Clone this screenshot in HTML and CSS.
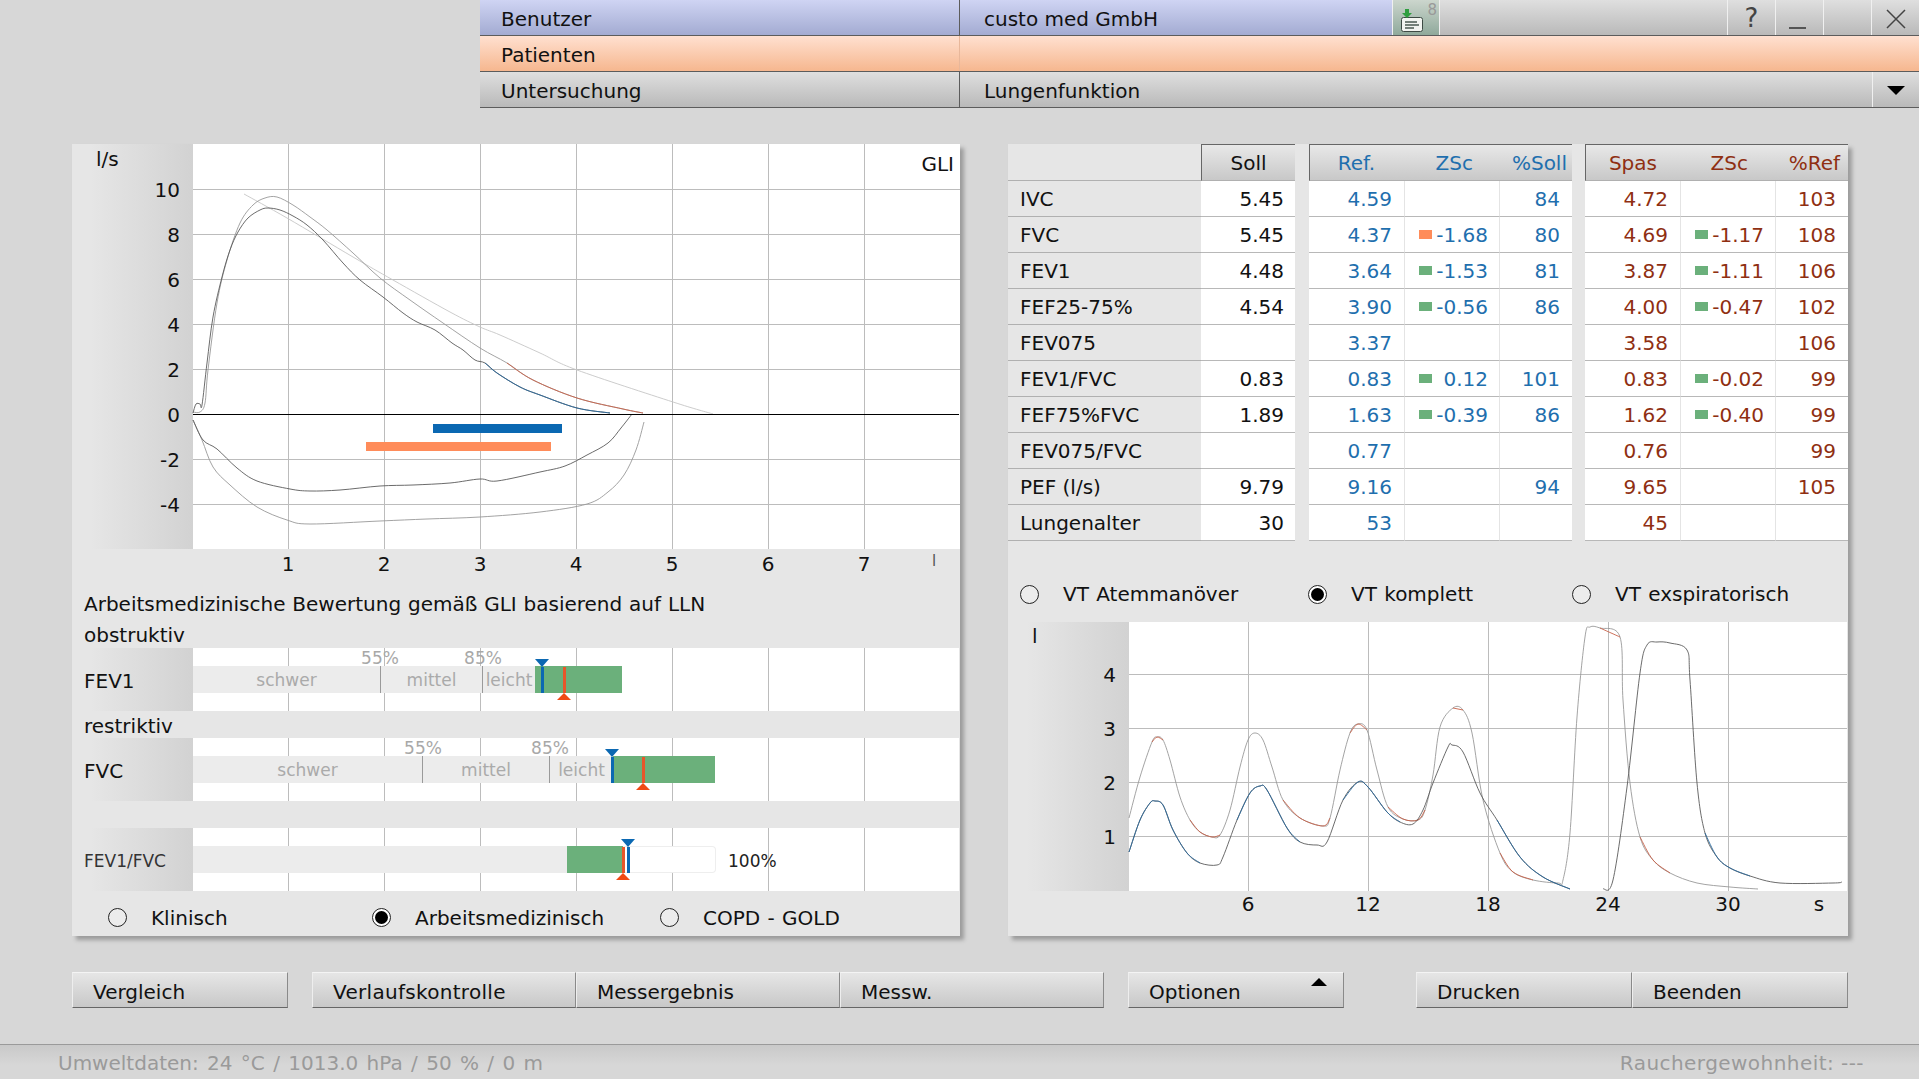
FILE: index.html
```html
<!DOCTYPE html>
<html lang="de">
<head>
    <meta charset="UTF-8">
    <title>Lungenfunktion</title>
    <link rel="stylesheet" href="styles.css">
</head>
<body>
    <header class="topbar">
        <div class="bar-row row-user">
            <div class="bar-label">Benutzer</div>
            <div class="bar-value">custo med GmbH</div>
            <div class="bar-icon">
                <svg width="48" height="35" viewBox="0 0 48 35">
                    <rect x="8.5" y="17.5" width="21" height="14" rx="2" fill="#f2f4f0" stroke="#3d4a44"/>
                    <path d="M12 22h12M12 25h14M12 28h9" stroke="#4b5a52" stroke-width="1.4"/>
                    <path d="M12 9h4v4h3l-5 5-5-5h3z" fill="#2f9e3f"/>
                </svg>
                <span class="icon-count">8</span>
            </div>
            <div class="bar-fill"></div>
            <div class="bar-btn">?</div>
            <div class="bar-btn btn-min"><span></span></div>
            <div class="bar-btn"></div>
            <div class="bar-btn">
                <svg width="22" height="22" viewBox="0 0 22 22"><path d="M2 2l18 18M20 2L2 20" stroke="#444" stroke-width="1.5"/></svg>
            </div>
        </div>
        <div class="bar-row row-patient">
            <div class="bar-label">Patienten</div>
            <div class="bar-value"></div>
        </div>
        <div class="bar-row row-exam">
            <div class="bar-label">Untersuchung</div>
            <div class="bar-value wide">Lungenfunktion</div>
            <div class="bar-btn btn-drop"><span class="arrow-down"></span></div>
        </div>
    </header>

    <main class="panels">
        <section class="panel panel-left">
            <svg class="flow-chart" width="888" height="445" viewBox="72 144 888 445">
                <defs>
                    <linearGradient id="axisFade" x1="0" x2="1" y1="0" y2="0">
                        <stop offset="0.15" stop-color="#e6e6e6"/>
                        <stop offset="1" stop-color="#d2d2d2"/>
                    </linearGradient>
                </defs>
                <rect x="72" y="144" width="121" height="405" fill="url(#axisFade)"/>
                <rect x="193" y="144" width="767" height="405" fill="#fff"/>
                <g class="grid">
                    <path d="M288 144V549M384 144V549M480 144V549M576 144V549M672 144V549M768 144V549M864 144V549"/>
                    <path d="M193 189H960M193 234H960M193 279H960M193 324H960M193 369H960M193 459H960M193 504H960"/>
                </g>
                <rect x="433" y="424" width="129" height="9" fill="#0b68b2"/>
                <rect x="366" y="442" width="185" height="9" fill="#ff8c5a"/>
                <polyline class="curve-ref" points="244,194 287,218 353,257 393,280 450,312 480,327 500,335 540,353 577,370 673,402 713,414"/>
                <polyline class="curve-light" points="193,412 200,412 205,403 208,370 217,303 227,260 240,223 253,205 265,198 277,197 293,205 310,217 327,230 353,253 380,278 410,300 443,323 480,348 507,363 533,380 577,398 623,409 643,413"/>
                <polyline class="tail-red" points="507,363 533,380 577,398 623,409 643,413"/>
                <polyline class="curve-dark" points="193,413 196,404 200,404 202,405 207,363 213,317 222,277 230,250 238,232 248,218 260,210 268,208 280,210 293,216 307,225 323,240 343,263 360,280 383,297 403,313 417,322 435,330 452,343 463,350 475,360 485,363 497,373 520,387 540,395 577,408 610,413"/>
                <polyline class="tail-blue" points="485,363 497,373 520,387 540,395 577,408 610,413"/>
                <polyline class="curve-light" points="193,420 202,440 213,467 230,485 257,507 287,520 310,524 380,521 427,519 480,517 540,512 587,504 608,492 624,475 636,450 644,422"/>
                <polyline class="curve-dark" points="193,420 203,440 217,449 237,468 257,481 290,489 310,491 340,490 380,486 413,485 450,483 480,479 497,481 540,472 565,466 587,455 608,443 621,428 632,414"/>
                <path class="zero-line" d="M193 414H959"/>
                <g class="axis-text end">
                    <text x="180" y="197">10</text>
                    <text x="180" y="242">8</text>
                    <text x="180" y="287">6</text>
                    <text x="180" y="332">4</text>
                    <text x="180" y="377">2</text>
                    <text x="180" y="422">0</text>
                    <text x="180" y="467">-2</text>
                    <text x="180" y="512">-4</text>
                    <text x="954" y="171">GLI</text>
                </g>
                <text class="axis-text" x="96" y="166">l/s</text>
                <g class="axis-text middle">
                    <text x="288" y="571">1</text>
                    <text x="384" y="571">2</text>
                    <text x="480" y="571">3</text>
                    <text x="576" y="571">4</text>
                    <text x="672" y="571">5</text>
                    <text x="768" y="571">6</text>
                    <text x="864" y="571">7</text>
                </g>
                <text class="axis-small" x="932" y="566">l</text>
            </svg>

            <div class="heading">Arbeitsmedizinische Bewertung gemäß GLI basierend auf LLN</div>
            <div class="sub-heading first">obstruktiv</div>
            <div class="grade-row">
                <div class="grade-label">FEV1</div>
                <div class="track">
                    <span class="pct" style="left:187px">55%</span>
                    <span class="pct" style="left:290px">85%</span>
                    <div class="band">
                        <div class="seg" style="width:188px">schwer</div>
                        <div class="seg" style="width:102px">mittel</div>
                        <div class="seg last" style="width:52px">leicht</div>
                        <div class="seg-ok" style="width:87px"></div>
                    </div>
                    <span class="marker blue" style="left:348px"></span>
                    <span class="marker red" style="left:370px"></span>
                </div>
            </div>
            <div class="sub-heading">restriktiv</div>
            <div class="grade-row">
                <div class="grade-label">FVC</div>
                <div class="track">
                    <span class="pct" style="left:230px">55%</span>
                    <span class="pct" style="left:357px">85%</span>
                    <div class="band">
                        <div class="seg" style="width:230px">schwer</div>
                        <div class="seg" style="width:127px">mittel</div>
                        <div class="seg last" style="width:63px">leicht</div>
                        <div class="seg-ok" style="width:102px"></div>
                    </div>
                    <span class="marker blue" style="left:418px"></span>
                    <span class="marker red" style="left:449px"></span>
                </div>
            </div>
            <div class="row-gap"></div>
            <div class="grade-row">
                <div class="grade-label small">FEV1/FVC</div>
                <div class="track">
                    <div class="band">
                        <div class="seg last" style="width:374px"></div>
                        <div class="seg-ok" style="width:56px"></div>
                        <div class="seg-ghost" style="width:93px"></div>
                        <div class="band-note">100%</div>
                    </div>
                    <span class="marker red" style="left:429px"></span>
                    <span class="marker blue" style="left:434px"></span>
                </div>
            </div>
            <div class="radio-row left-radios">
                <label class="radio"><span class="dot"></span>Klinisch</label>
                <label class="radio"><span class="dot on"></span>Arbeitsmedizinisch</label>
                <label class="radio"><span class="dot"></span>COPD - GOLD</label>
            </div>
        </section>

        <section class="panel panel-right">
            <table class="values">
                <colgroup>
                    <col class="c-name"><col class="c-soll"><col class="c-gap">
                    <col class="c-val"><col class="c-z"><col class="c-pct"><col class="c-gap2">
                    <col class="c-val"><col class="c-z"><col class="c-pct">
                </colgroup>
                <thead>
                    <tr>
                        <th class="blank"></th>
                        <th class="head start center">Soll</th>
                        <th class="blank"></th>
                        <th class="head start blue-text" style="padding-right:29px">Ref.</th>
                        <th class="head blue-text" style="padding-right:27px">ZSc</th>
                        <th class="head blue-text" style="padding-right:5px">%Soll</th>
                        <th class="blank"></th>
                        <th class="head start red-text" style="padding-right:23px">Spas</th>
                        <th class="head red-text" style="padding-right:28px">ZSc</th>
                        <th class="head red-text" style="padding-right:8px">%Ref</th>
                    </tr>
                </thead>
                <tbody>
                    <tr><th>IVC</th><td class="s">5.45</td><td class="gap"></td><td class="b">4.59</td><td class="b z"></td><td class="b">84</td><td class="gap"></td><td class="r">4.72</td><td class="r z"></td><td class="r">103</td></tr>
                    <tr><th>FVC</th><td class="s">5.45</td><td class="gap"></td><td class="b">4.37</td><td class="b z"><div class="zs"><i class="warn"></i>-1.68</div></td><td class="b">80</td><td class="gap"></td><td class="r">4.69</td><td class="r z"><div class="zs"><i></i>-1.17</div></td><td class="r">108</td></tr>
                    <tr><th>FEV1</th><td class="s">4.48</td><td class="gap"></td><td class="b">3.64</td><td class="b z"><div class="zs"><i></i>-1.53</div></td><td class="b">81</td><td class="gap"></td><td class="r">3.87</td><td class="r z"><div class="zs"><i></i>-1.11</div></td><td class="r">106</td></tr>
                    <tr><th>FEF25-75%</th><td class="s">4.54</td><td class="gap"></td><td class="b">3.90</td><td class="b z"><div class="zs"><i></i>-0.56</div></td><td class="b">86</td><td class="gap"></td><td class="r">4.00</td><td class="r z"><div class="zs"><i></i>-0.47</div></td><td class="r">102</td></tr>
                    <tr><th>FEV075</th><td class="s"></td><td class="gap"></td><td class="b">3.37</td><td class="b z"></td><td class="b"></td><td class="gap"></td><td class="r">3.58</td><td class="r z"></td><td class="r">106</td></tr>
                    <tr><th>FEV1/FVC</th><td class="s">0.83</td><td class="gap"></td><td class="b">0.83</td><td class="b z"><div class="zs"><i></i>0.12</div></td><td class="b">101</td><td class="gap"></td><td class="r">0.83</td><td class="r z"><div class="zs"><i></i>-0.02</div></td><td class="r">99</td></tr>
                    <tr><th>FEF75%FVC</th><td class="s">1.89</td><td class="gap"></td><td class="b">1.63</td><td class="b z"><div class="zs"><i></i>-0.39</div></td><td class="b">86</td><td class="gap"></td><td class="r">1.62</td><td class="r z"><div class="zs"><i></i>-0.40</div></td><td class="r">99</td></tr>
                    <tr><th>FEV075/FVC</th><td class="s"></td><td class="gap"></td><td class="b">0.77</td><td class="b z"></td><td class="b"></td><td class="gap"></td><td class="r">0.76</td><td class="r z"></td><td class="r">99</td></tr>
                    <tr><th>PEF (l/s)</th><td class="s">9.79</td><td class="gap"></td><td class="b">9.16</td><td class="b z"></td><td class="b">94</td><td class="gap"></td><td class="r">9.65</td><td class="r z"></td><td class="r">105</td></tr>
                    <tr><th>Lungenalter</th><td class="s">30</td><td class="gap"></td><td class="b">53</td><td class="b z"></td><td class="b"></td><td class="gap"></td><td class="r">45</td><td class="r z"></td><td class="r"></td></tr>
                </tbody>
            </table>

            <div class="radio-row right-radios">
                <label class="radio"><span class="dot"></span>VT Atemmanöver</label>
                <label class="radio"><span class="dot on"></span>VT komplett</label>
                <label class="radio"><span class="dot"></span>VT exspiratorisch</label>
            </div>

            <svg class="volume-chart" width="840" height="314" viewBox="1008 622 840 314">
                <defs>
                    <linearGradient id="axisFade2" x1="0" x2="1" y1="0" y2="0">
                        <stop offset="0.15" stop-color="#e6e6e6"/>
                        <stop offset="1" stop-color="#d2d2d2"/>
                    </linearGradient>
                </defs>
                <rect x="1008" y="622" width="121" height="269" fill="url(#axisFade2)"/>
                <rect x="1129" y="622" width="718" height="269" fill="#fff"/>
                <g class="grid">
                    <path d="M1248 622V891M1368 622V891M1488 622V891M1608 622V891M1728 622V891"/>
                    <path d="M1129 674H1847M1129 728H1847M1129 782H1847M1129 836H1847"/>
                </g>
                <polyline class="curve-light" points="1129,818 1140,777 1152,742 1157,737 1163,740 1170,760 1180,797 1190,820 1200,832 1212,837 1220,835 1230,810 1240,767 1248,740 1255,733 1263,740 1272,767 1283,800 1300,818 1323,826 1330,818 1340,770 1350,733 1358,724 1367,730 1377,770 1388,807 1403,819 1418,820 1425,810 1433,775 1440,727 1453,708 1463,710 1472,733 1483,800 1500,853 1513,872 1533,880 1558,883 1563,880 1570,833 1577,717 1585,637 1590,627 1600,628 1620,637 1623,700 1630,783 1640,837 1653,860 1670,873 1697,883 1730,887 1758,889"/>
                <polyline class="tail-red" points="1152,742 1157,737 1163,740"/>
                <polyline class="tail-red" points="1190,820 1200,832 1212,837 1220,835"/>
                <polyline class="tail-red" points="1283,800 1300,818 1323,826 1330,818"/>
                <polyline class="tail-red" points="1350,733 1358,724 1367,730"/>
                <polyline class="tail-red" points="1388,807 1403,819 1418,820 1425,810"/>
                <polyline class="tail-red" points="1453,708 1463,710"/>
                <polyline class="tail-red" points="1500,853 1513,872 1533,880"/>
                <polyline class="tail-red" points="1600,628 1620,637"/>
                <polyline class="tail-red" points="1640,837 1653,860 1670,873"/>
                <polyline class="curve-dark" points="1129,852 1140,820 1150,803 1155,801 1163,805 1173,830 1187,853 1200,863 1217,865 1223,857 1237,820 1250,793 1260,786 1267,790 1287,828 1300,842 1317,845 1327,842 1343,800 1358,782 1368,787 1387,812 1400,822 1413,824 1423,810 1433,783 1448,747 1452,745 1463,752 1480,793 1497,820 1520,857 1543,877 1570,889"/>
                <polyline class="tail-blue" points="1129,852 1140,820 1150,803 1155,801 1163,805 1173,830 1187,853 1200,863"/>
                <polyline class="tail-blue" points="1237,820 1250,793 1260,786 1267,790 1287,828 1300,842"/>
                <polyline class="tail-blue" points="1343,800 1358,782 1368,787 1387,812 1400,822"/>
                <polyline class="tail-blue" points="1497,820 1520,857 1543,877 1570,889"/>
                <polyline class="curve-dark" points="1603,889 1613,880 1627,787 1640,673 1647,645 1657,642 1670,643 1687,650 1690,680 1697,783 1705,833 1717,857 1730,868 1750,876 1780,883 1833,883 1842,882"/>
                <polyline class="tail-blue" points="1705,833 1717,857 1730,868 1750,876"/>
                <g class="axis-text end">
                    <text x="1116" y="682">4</text>
                    <text x="1116" y="736">3</text>
                    <text x="1116" y="790">2</text>
                    <text x="1116" y="844">1</text>
                </g>
                <text class="axis-text" x="1032" y="643">l</text>
                <g class="axis-text middle">
                    <text x="1248" y="911">6</text>
                    <text x="1368" y="911">12</text>
                    <text x="1488" y="911">18</text>
                    <text x="1608" y="911">24</text>
                    <text x="1728" y="911">30</text>
                    <text x="1819" y="911">s</text>
                </g>
            </svg>
        </section>
    </main>

    <nav class="actions">
        <div class="btn-group gap-24">
            <button class="btn w216">Vergleich</button>
        </div>
        <div class="btn-group gap-24">
            <button class="btn w264 wider">Verlaufskontrolle</button>
            <button class="btn w264">Messergebnis</button>
            <button class="btn w264">Messw.</button>
        </div>
        <div class="btn-group gap-72">
            <button class="btn w216 has-arrow">Optionen<span class="arrow-up"></span></button>
        </div>
        <div class="btn-group">
            <button class="btn w216">Drucken</button>
            <button class="btn w216">Beenden</button>
        </div>
    </nav>

    <footer class="status">
        <span class="status-left">Umweltdaten: 24 °C / 1013.0 hPa / 50 % / 0 m</span>
        <span class="status-right">Rauchergewohnheit: ---</span>
    </footer>

    <script src="chart.js"></script>
</body>
</html>
```

FILE: styles.css
```css
* {
    box-sizing: border-box;
}

html, body {
    margin: 0;
    height: 100%;
}

body {
    font-family: "DejaVu Sans", sans-serif;
    font-size: 20px;
    color: #111;
    background: #d7d7d7;
    overflow: hidden;
    display: flex;
    flex-direction: column;
}

/* top bar */
.topbar {
    margin-left: 480px;
    height: 108px;
    flex: none;
}

.bar-row {
    display: flex;
    height: 36px;
    border-bottom: 1px solid #5c5c5c;
}

.bar-row > div {
    line-height: 39px;
    height: 35px;
    background: inherit;
}

.row-user {
    background: linear-gradient(#cfd4f3, #a3abd2);
}

.row-patient {
    background: linear-gradient(#ffe0d0, #f6b78f);
}

.row-exam {
    background: linear-gradient(#dfdfdf, #b9b9b9);
}

.bar-label {
    width: 480px;
    padding-left: 21px;
    border-right: 1px solid #5c5c5c;
}

.row-patient .bar-label {
    border-right-color: #e8b79a;
}

.bar-value {
    width: 432px;
    padding-left: 24px;
}

.row-patient .bar-value {
    flex: 1;
}

.bar-value.wide {
    width: 912px;
}

.bar-icon {
    width: 48px;
    position: relative;
    border-left: 1px solid #f0f0f0;
    border-right: 1px solid #f0f0f0;
    background: linear-gradient(#ccd6cd, #8fa99b) !important;
}

.bar-icon svg {
    display: block;
}

.icon-count {
    position: absolute;
    top: 1px;
    right: 2px;
    font-size: 15px;
    line-height: 18px;
    color: #999;
}

.bar-fill {
    width: 287px;
    background: linear-gradient(#dfdfdf, #b9b9b9) !important;
}

.bar-btn {
    width: 48px;
    flex: 1;
    border-left: 1px solid #f0f0f0;
    background: linear-gradient(#dfdfdf, #b9b9b9) !important;
    color: #444;
    font-size: 26px;
    display: flex;
    align-items: center;
    justify-content: center;
    padding-top: 2px;
}

.btn-min span {
    width: 17px;
    height: 2px;
    background: #555;
    margin: 18px 4px 0 0;
}

.arrow-down {
    border-left: 9px solid transparent;
    border-right: 9px solid transparent;
    border-top: 9px solid #000;
}

/* panels */
.panels {
    display: flex;
    gap: 48px;
    padding: 36px 0 0 72px;
    height: 864px;
    flex: none;
}

.panel {
    height: 792px;
    background: #e6e6e6;
    box-shadow: 4px 4px 4px #9c9c9c;
}

.panel-left {
    width: 888px;
}

.panel-right {
    width: 840px;
}

.flow-chart, .volume-chart {
    display: block;
}

.grid path {
    fill: none;
    stroke: #bcbcbc;
    stroke-width: 1;
    shape-rendering: crispEdges;
}

.zero-line {
    stroke: #000;
    stroke-width: 1;
    shape-rendering: crispEdges;
}

.axis-text text, text.axis-text {
    font-family: "DejaVu Sans", sans-serif;
    font-size: 20px;
    fill: #111;
}

.axis-text.end text {
    text-anchor: end;
}

.axis-text.middle text {
    text-anchor: middle;
}

.axis-small {
    font-family: "DejaVu Sans", sans-serif;
    font-size: 15px;
    fill: #555;
}

polyline, .curve {
    fill: none;
    stroke-linejoin: round;
}

.curve-dark {
    stroke: #5a5a5a;
    stroke-width: 0.9;
}

.curve-light {
    stroke: #989898;
    stroke-width: 0.9;
}

.curve-ref {
    stroke: #c6c6c6;
    stroke-width: 0.9;
}

.tail-blue {
    stroke: #2a6a9e;
    stroke-width: 0.9;
}

.tail-red {
    stroke: #c8624a;
    stroke-width: 0.9;
}

/* grading rows */
.heading {
    height: 30px;
    line-height: 30px;
    padding-left: 12px;
    word-spacing: 0.5px;
}

.sub-heading {
    height: 27px;
    line-height: 30px;
    padding-left: 12px;
}

.sub-heading.first {
    height: 29px;
    line-height: 32px;
}

.grade-row {
    display: flex;
    height: 63px;
    padding-right: 1px;
}

.grade-label {
    width: 121px;
    padding-left: 12px;
    line-height: 67px;
    background: linear-gradient(to right, #e6e6e6 15%, #d2d2d2);
}

.grade-label.small {
    font-size: 17px;
    color: #333;
}

.track {
    flex: 1;
    position: relative;
    background: #fff repeating-linear-gradient(to right, transparent 0 95px, #bcbcbc 95px 96px);
}

.band {
    display: flex;
    height: 27px;
    margin-top: 18px;
    position: absolute;
    top: 0;
    left: 0;
    font-size: 17px;
}

.seg {
    display: flex;
    align-items: center;
    justify-content: center;
    background: #ececec;
    color: #aaa;
    border-right: 1px solid #9a9a9a;
}

.seg.last {
    border-right: none;
}

.seg-ok {
    background: #6bb07b;
}

.seg-ghost {
    background: #fff;
    border: 1px solid #eee;
    border-left: none;
    border-radius: 0 4px 4px 0;
}

.band-note {
    margin-left: 12px;
    line-height: 31px;
    color: #222;
}

.pct {
    position: absolute;
    top: 0;
    font-size: 17px;
    line-height: 20px;
    color: #a8a8a8;
    transform: translateX(-50%);
}

.marker {
    position: absolute;
    width: 3px;
    top: 19px;
    height: 26px;
}

.marker::after {
    content: "";
    position: absolute;
    left: -6px;
    border-left: 7.5px solid transparent;
    border-right: 7.5px solid transparent;
}

.marker.blue {
    background: #0b68b2;
}

.marker.blue::after {
    top: -8px;
    border-top: 8px solid #0b68b2;
}

.marker.red {
    background: #e8562a;
    z-index: 1;
}

.marker.red::after {
    bottom: -7px;
    border-bottom: 7px solid #f04a14;
}

.row-gap {
    height: 27px;
}

/* radio buttons */
.radio-row {
    display: grid;
    align-items: center;
    word-spacing: 1px;
}

.radio {
    display: flex;
    align-items: center;
    gap: 24px;
}

.dot {
    width: 19px;
    height: 19px;
    flex: none;
    border: 1px solid #222;
    border-radius: 50%;
    background: #ececec;
    position: relative;
}

.dot.on {
    background: #fff;
}

.dot.on::after {
    content: "";
    position: absolute;
    left: 2px;
    top: 2px;
    width: 13px;
    height: 13px;
    border-radius: 50%;
    background: #000;
}

.left-radios {
    height: 45px;
    padding: 8px 0 0 36px;
    grid-template-columns: 264px 288px 1fr;
}

.left-radios .radio {
    line-height: 26px;
}

.right-radios {
    height: 30px;
    margin: 38px 0 13px;
    padding-left: 12px;
    grid-template-columns: 288px 264px 1fr;
}

/* value table */
.values {
    width: 840px;
    table-layout: fixed;
    border-collapse: separate;
    border-spacing: 0;
}

.c-name { width: 193px; }
.c-soll { width: 94px; }
.c-gap { width: 14px; }
.c-gap2 { width: 13px; }
.c-val { width: 95px; }
.c-z { width: 96px; }
.c-pct { width: 72px; }

.values th, .values td {
    height: 36px;
    padding: 0;
    font-weight: normal;
}

.values thead th {
    text-align: right;
    height: 37px;
    border-bottom: 1px solid #b0b0b0;
}

.values thead th:nth-child(3), .values thead th:nth-child(7) {
    border-bottom: none;
}

.values thead .head {
    background: linear-gradient(#e8e8e8, #c8c8c8);
    border-top: 1px solid #666;
}

.values thead .start {
    border-left: 1px solid #666;
}

.values thead .center {
    text-align: center;
}

.blue-text {
    color: #1f6fae;
}

.red-text {
    color: #8f2f12;
}

.values tbody th {
    text-align: left;
    padding-left: 12px;
    border-bottom: 1px solid #b0b0b0;
}

.values tbody td {
    text-align: right;
    padding-right: 12px;
    background: #fff;
    border-bottom: 1px solid #b8b8b8;
}

.values tbody td.gap {
    background: transparent;
    padding: 0;
    border-bottom: none;
}

.values tbody td.s, .values tbody td.z {
    padding-right: 11px;
}

.values td.b {
    color: #1f6fae;
}

.values td.r {
    color: #8f2f12;
}

.values td.z {
    border-left: 1px solid #e4e4e4;
    border-right: 1px solid #e4e4e4;
}

.zs {
    display: flex;
    align-items: center;
    justify-content: space-between;
    padding-left: 14px;
}

.zs i {
    width: 13px;
    height: 9px;
    background: #6bb07b;
}

.zs i.warn {
    background: #ff8c5a;
}

/* bottom buttons */
.actions {
    display: flex;
    padding-left: 72px;
    height: 72px;
    flex: none;
}

.btn-group {
    display: flex;
    height: 36px;
}

.gap-24 {
    margin-right: 24px;
}

.gap-72 {
    margin-right: 72px;
}

.btn {
    height: 36px;
    padding: 4px 0 0 20px;
    text-align: left;
    font: inherit;
    color: #111;
    background: linear-gradient(#e6e6e6, #c8c8c8);
    border: none;
    border-top: 1px solid #f4f4f4;
    border-left: 1px solid #eee;
    border-right: 1px solid #8a8a8a;
    border-bottom: 1px solid #666;
    position: relative;
}

.wider {
    letter-spacing: 0.3px;
}

.w216 {
    width: 216px;
}

.w264 {
    width: 264px;
}

.arrow-up {
    position: absolute;
    right: 16px;
    top: 5px;
    border-left: 8px solid transparent;
    border-right: 8px solid transparent;
    border-bottom: 8px solid #000;
}

/* status line */
.status {
    flex: 1;
    display: flex;
    justify-content: space-between;
    padding: 6px 55px 0 58px;
    border-top: 1px solid #9a9a9a;
    background: linear-gradient(#c9c9c9, #d7d7d7 60%);
    color: #9a9a9a;
}

.status-left {
    word-spacing: 2px;
}

.status-right {
    letter-spacing: 0.45px;
}
```

FILE: chart.js
```js
// turn the measured polylines into smooth curves
document.querySelectorAll('polyline').forEach(line => {
    const pts = line.getAttribute('points').trim().split(/\s+/).map(p => p.split(',').map(Number));
    let d = `M${pts[0][0]} ${pts[0][1]}`;

    for (let i = 0; i < pts.length - 1; i++) {
        const p0 = pts[i - 1] || pts[i];
        const p1 = pts[i];
        const p2 = pts[i + 1];
        const p3 = pts[i + 2] || p2;
        const c1x = p1[0] + (p2[0] - p0[0]) / 6;
        const c1y = p1[1] + (p2[1] - p0[1]) / 6;
        const c2x = p2[0] - (p3[0] - p1[0]) / 6;
        const c2y = p2[1] - (p3[1] - p1[1]) / 6;
        d += `C${c1x} ${c1y} ${c2x} ${c2y} ${p2[0]} ${p2[1]}`;
    }

    const path = document.createElementNS('http://www.w3.org/2000/svg', 'path');
    path.setAttribute('d', d);
    path.setAttribute('class', 'curve ' + line.getAttribute('class'));
    line.replaceWith(path);
});
```
